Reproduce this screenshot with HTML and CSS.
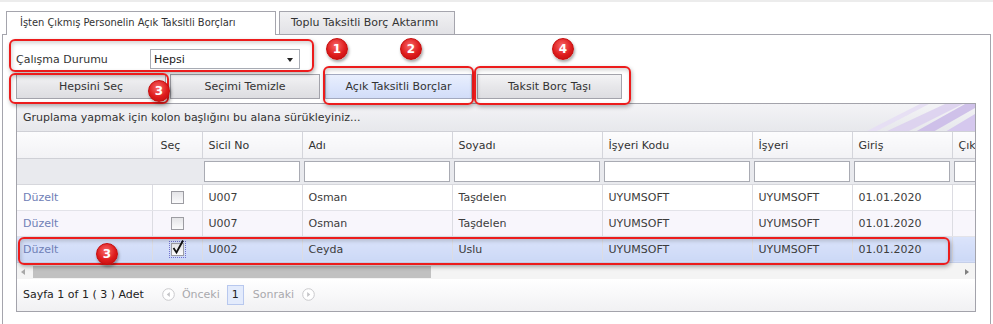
FILE: index.html
```html
<!DOCTYPE html>
<html lang="tr">
  <head>
    <meta charset="UTF-8" />
    <title>Açık Taksitli Borçlar</title>
    <link rel="stylesheet" href="styles.css">
  </head>
  <body>
    <div class="page">
      <div class="tabs">
        <div class="tab tab-active">İşten Çıkmış Personelin Açık Taksitli Borçları</div>
        <div class="tab">Toplu Taksitli Borç Aktarımı</div>
      </div>

      <div class="panel">
        <div class="filter-row">
          <label class="filter-label">Çalışma Durumu</label>
          <div class="select">
            <span>Hepsi</span>
            <span class="select-arrow"></span>
          </div>
        </div>

        <div class="button-row">
          <button class="btn btn-first">Hepsini Seç</button>
          <button class="btn btn-second">Seçimi Temizle</button>
          <button class="btn btn-blue">Açık Taksitli Borçlar</button>
          <button class="btn btn-last">Taksit Borç Taşı</button>
        </div>

        <div class="grid">
          <div class="group-panel">
            <span>Gruplama yapmak için kolon başlığını bu alana sürükleyiniz...</span>
            <svg class="group-deco" width="130" height="28" viewBox="0 0 130 28">
              <polygon points="40,28 100,0 118,0 62,28" fill="#d9cdef" opacity="0.8"/>
              <polygon points="70,28 120,0 130,0 130,4 88,28" fill="#cbbbe8" opacity="0.9"/>
              <polygon points="20,28 75,0 84,0 30,28" fill="#e6def4" opacity="0.9"/>
              <polygon points="100,28 130,10 130,28" fill="#d5c8ee"/>
            </svg>
          </div>

          <div class="table-wrap">
            <table class="data">
              <colgroup>
                <col class="c-edit"><col class="c-sec"><col class="c-100"><col class="c-150">
                <col class="c-150"><col class="c-150"><col class="c-100"><col class="c-100"><col class="c-100">
              </colgroup>
              <tr class="head">
                <th></th><th class="th-sec">Seç</th><th>Sicil No</th><th>Adı</th><th>Soyadı</th>
                <th>İşyeri Kodu</th><th>İşyeri</th><th>Giriş</th><th>Çıkış</th>
              </tr>
              <tr class="filters">
                <td></td><td></td>
                <td><input class="filter-input"></td><td><input class="filter-input"></td>
                <td><input class="filter-input"></td><td><input class="filter-input"></td>
                <td><input class="filter-input"></td><td><input class="filter-input"></td>
                <td><input class="filter-input"></td>
              </tr>
              <tr>
                <td><span class="edit-link">Düzelt</span></td>
                <td class="check-cell"><span class="check"></span></td>
                <td>U007</td><td>Osman</td><td>Taşdelen</td><td>UYUMSOFT</td><td>UYUMSOFT</td><td>01.01.2020</td><td></td>
              </tr>
              <tr class="alt">
                <td><span class="edit-link">Düzelt</span></td>
                <td class="check-cell"><span class="check"></span></td>
                <td>U007</td><td>Osman</td><td>Taşdelen</td><td>UYUMSOFT</td><td>UYUMSOFT</td><td>01.01.2020</td><td></td>
              </tr>
              <tr class="selected">
                <td><span class="edit-link">Düzelt</span></td>
                <td class="check-cell">
                  <span class="check checked">
                    <svg width="14" height="15" viewBox="0 0 14 15"><path d="M2.5 8 L5.5 12.5 L12 0.5" fill="none" stroke="#111" stroke-width="1.8"/></svg>
                  </span>
                </td>
                <td>U002</td><td>Ceyda</td><td>Uslu</td><td>UYUMSOFT</td><td>UYUMSOFT</td><td>01.01.2020</td><td></td>
              </tr>
            </table>
          </div>

          <div class="hscroll">
            <span class="arrow-left"></span>
            <div class="thumb"></div>
            <span class="arrow-right"></span>
          </div>

          <div class="pager">
            <span>Sayfa 1 of 1 ( 3 ) Adet</span>
            <span class="pager-nav pager-prev">
              <svg width="13" height="13" viewBox="0 0 13 13"><circle cx="6.5" cy="6.5" r="5.8" fill="#fff" stroke="#c9c9cc"/><path d="M7.8 4 L4.8 6.5 L7.8 9 Z" fill="#c3c3c6"/></svg>
              <span class="pager-off">Önceki</span>
            </span>
            <span class="page-num">1</span>
            <span class="pager-nav pager-next">
              <span class="pager-off">Sonraki</span>
              <svg width="13" height="13" viewBox="0 0 13 13"><circle cx="6.5" cy="6.5" r="5.8" fill="#fff" stroke="#c9c9cc"/><path d="M5.2 4 L8.2 6.5 L5.2 9 Z" fill="#c3c3c6"/></svg>
            </span>
          </div>
        </div>
      </div>

      <!-- annotation marks laid over the screen -->
      <div class="mark mark-filter"></div>
      <div class="mark mark-selectall"></div>
      <div class="mark mark-open"></div>
      <div class="mark mark-move"></div>
      <div class="mark mark-row"></div>
      <div class="badge badge-1">1</div>
      <div class="badge badge-2">2</div>
      <div class="badge badge-3">3</div>
      <div class="badge badge-4">4</div>
      <div class="badge badge-row">3</div>
    </div>
  </body>
</html>
```

FILE: styles.css
```css
* {
  box-sizing: border-box;
}

body {
  margin: 0;
  font-family: "DejaVu Sans", sans-serif;
  font-size: 11px;
  color: #333;
  background-color: #fff;
}

.page {
  position: relative;
  width: 993px;
  height: 324px;
  overflow: hidden;
  border-top: 2px solid #ececec;
  padding: 9px 0 0 2px;
}

/* tabs */
.tabs {
  display: flex;
  gap: 3px;
  margin-left: 4px;
  height: 23px;
}

.tab {
  position: relative;
  border: 1px solid #a5a5ad;
  border-bottom: none;
  padding-left: 11px;
  line-height: 22px;
  width: 176px;
  background: linear-gradient(#f1f1f3, #e2e2e6);
  color: #333;
}

.tab-active {
  z-index: 1;
  width: 270px;
  height: 24px;
  padding-left: 13px;
  background: #fff;
  font-family: "DejaVu Sans Condensed", "DejaVu Sans", sans-serif;
}

/* panel */
.panel {
  width: 989px;
  height: 300px;
  border: 1px solid #a5a5ad;
  padding: 14px 0 0 13px;
}

.filter-row {
  display: flex;
  align-items: center;
  height: 20px;
}

.filter-label {
  width: 134px;
  padding-top: 1px;
}

.select {
  display: flex;
  align-items: center;
  justify-content: space-between;
  width: 150px;
  height: 20px;
  border: 1px solid #a9adb5;
  padding: 1px 6px 0 3px;
  background-color: #fff;
  color: #222;
}

.select-arrow {
  width: 0;
  height: 0;
  border-left: 3.5px solid transparent;
  border-right: 3.5px solid transparent;
  border-top: 4px solid #222;
}

.button-row {
  display: flex;
  margin-top: 5px;
}

.btn {
  height: 25px;
  width: 150px;
  border: 1px solid #a3a3ab;
  background: linear-gradient(#f3f3f5, #e7e7ea 50%, #dddde1);
  font-family: inherit;
  font-size: 11px;
  color: #333;
  padding: 0;
}

.btn-second {
  margin-left: 4px;
}

.btn-blue {
  width: 147px;
  margin-left: 5px;
  border-color: #a3a9bf;
  background: linear-gradient(#e9effd, #dde6fc 50%, #d2ddf8);
}

.btn-last {
  width: 145px;
  margin-left: 5px;
}

/* grid */
.grid {
  width: 960px;
  margin-top: 4px;
  border: 1px solid #a3a3ab;
}

.group-panel {
  position: relative;
  height: 28px;
  padding: 7px 0 0 6px;
  background: linear-gradient(#f3f3f6, #e7e8ec);
  border-bottom: 1px solid #cfd0d6;
  overflow: hidden;
}

.group-deco {
  position: absolute;
  right: 0;
  top: 0;
}

.table-wrap {
  width: 958px;
  overflow: hidden;
}

.data {
  border-collapse: collapse;
  table-layout: fixed;
  width: 1035px;
}

.c-edit { width: 135px; }
.c-sec { width: 50px; }
.c-100 { width: 100px; }
.c-150 { width: 150px; }

.data th,
.data td {
  height: 26px;
  padding: 0 6px;
  text-align: left;
  font-weight: normal;
  white-space: nowrap;
  overflow: hidden;
  border-right: 1px solid #dcdce2;
  border-bottom: 1px solid #e3e3e9;
  color: #3c3c3c;
}

.head th {
  background: linear-gradient(#fcfcfd, #f2f2f5);
  border-right-color: #d4d5db;
  border-bottom-color: #cfd0d6;
  padding-top: 1px;
  color: #333;
}

.data th.th-sec {
  padding-left: 8px;
}

.filters td {
  background-color: #e9eaee;
  border-right: none;
  border-bottom-color: #d6d7dc;
  padding: 0 2px;
}

.filter-input {
  display: block;
  width: 100%;
  height: 21px;
  border: 1px solid #a9abb3;
  background-color: #fff;
  margin: 0;
}

.alt td {
  background-color: #f8f6fc;
}

.selected td {
  background: linear-gradient(#dbe4fb, #ccd8f6);
  border-bottom-color: #c5cfe9;
}

.edit-link {
  color: #6f80b6;
}

.data td.check-cell {
  text-align: center;
  padding: 0;
}

.check {
  display: inline-block;
  width: 13px;
  height: 13px;
  border: 1px solid #9c9ca2;
  background: linear-gradient(#e4e4e7, #fbfbfc);
  vertical-align: middle;
  position: relative;
}

.checked {
  outline: 1px dotted #7070d0;
  outline-offset: 1px;
}

.checked svg {
  position: absolute;
  left: -1px;
  top: -4px;
}

/* horizontal scrollbar */
.hscroll {
  display: flex;
  align-items: center;
  height: 16px;
  padding: 3px 6px 0 4px;
  background-color: #f4f4f4;
}

.arrow-left,
.arrow-right {
  width: 0;
  height: 0;
  border-top: 3.5px solid transparent;
  border-bottom: 3.5px solid transparent;
}

.arrow-left {
  border-right: 4px solid #a8a8a8;
}

.arrow-right {
  margin-left: auto;
  border-left: 4px solid #808080;
}

.thumb {
  width: 398px;
  height: 12px;
  margin-left: 8px;
  background-color: #c1c1c1;
}

/* pager */
.pager {
  display: flex;
  align-items: center;
  height: 32px;
  padding: 0 0 0 6px;
  background: linear-gradient(#ffffff, #f1f1f3);
  color: #222;
}

.pager-nav {
  display: flex;
  align-items: center;
  gap: 7px;
}

.pager-prev {
  margin-left: 18px;
}

.pager-next {
  margin-left: 9px;
  gap: 8px;
}

.pager-off {
  color: #a9a9ad;
}

.page-num {
  margin-left: 7px;
  width: 17px;
  height: 20px;
  line-height: 18px;
  text-align: center;
  border: 1px solid #b8c8ee;
  background-color: #e3ebfc;
  color: #222;
}

/* annotations */
.mark {
  position: absolute;
  border: 2px solid #ec1c1c;
  border-radius: 6px;
  box-shadow: 1px 2px 4px rgba(0, 0, 0, 0.3), inset 1px 2px 4px rgba(0, 0, 0, 0.18);
}

.mark-filter { left: 9px; top: 37px; width: 305px; height: 33px; }
.mark-selectall { left: 9px; top: 71px; width: 160px; height: 31px; }
.mark-open { left: 323px; top: 64px; width: 151px; height: 39px; }
.mark-move { left: 474px; top: 64px; width: 157px; height: 39px; }
.mark-row { left: 18px; top: 235px; width: 932px; height: 28px; }

.badge {
  position: absolute;
  width: 22px;
  height: 22px;
  border-radius: 50%;
  border: 1px solid #c40d0d;
  background: radial-gradient(circle at 45% 35%, #f86a6a, #de1c1c 55%, #b80a0a);
  box-shadow: 1px 2px 3px rgba(0, 0, 0, 0.35);
  color: #fff;
  font-family: "DejaVu Sans", sans-serif;
  font-weight: bold;
  font-size: 12px;
  line-height: 20px;
  text-align: center;
}

.badge-1 { left: 326px; top: 36px; }
.badge-2 { left: 400px; top: 36px; }
.badge-4 { left: 552px; top: 36px; }
.badge-3 { left: 148px; top: 78px; }
.badge-row { left: 96px; top: 241px; }
```
